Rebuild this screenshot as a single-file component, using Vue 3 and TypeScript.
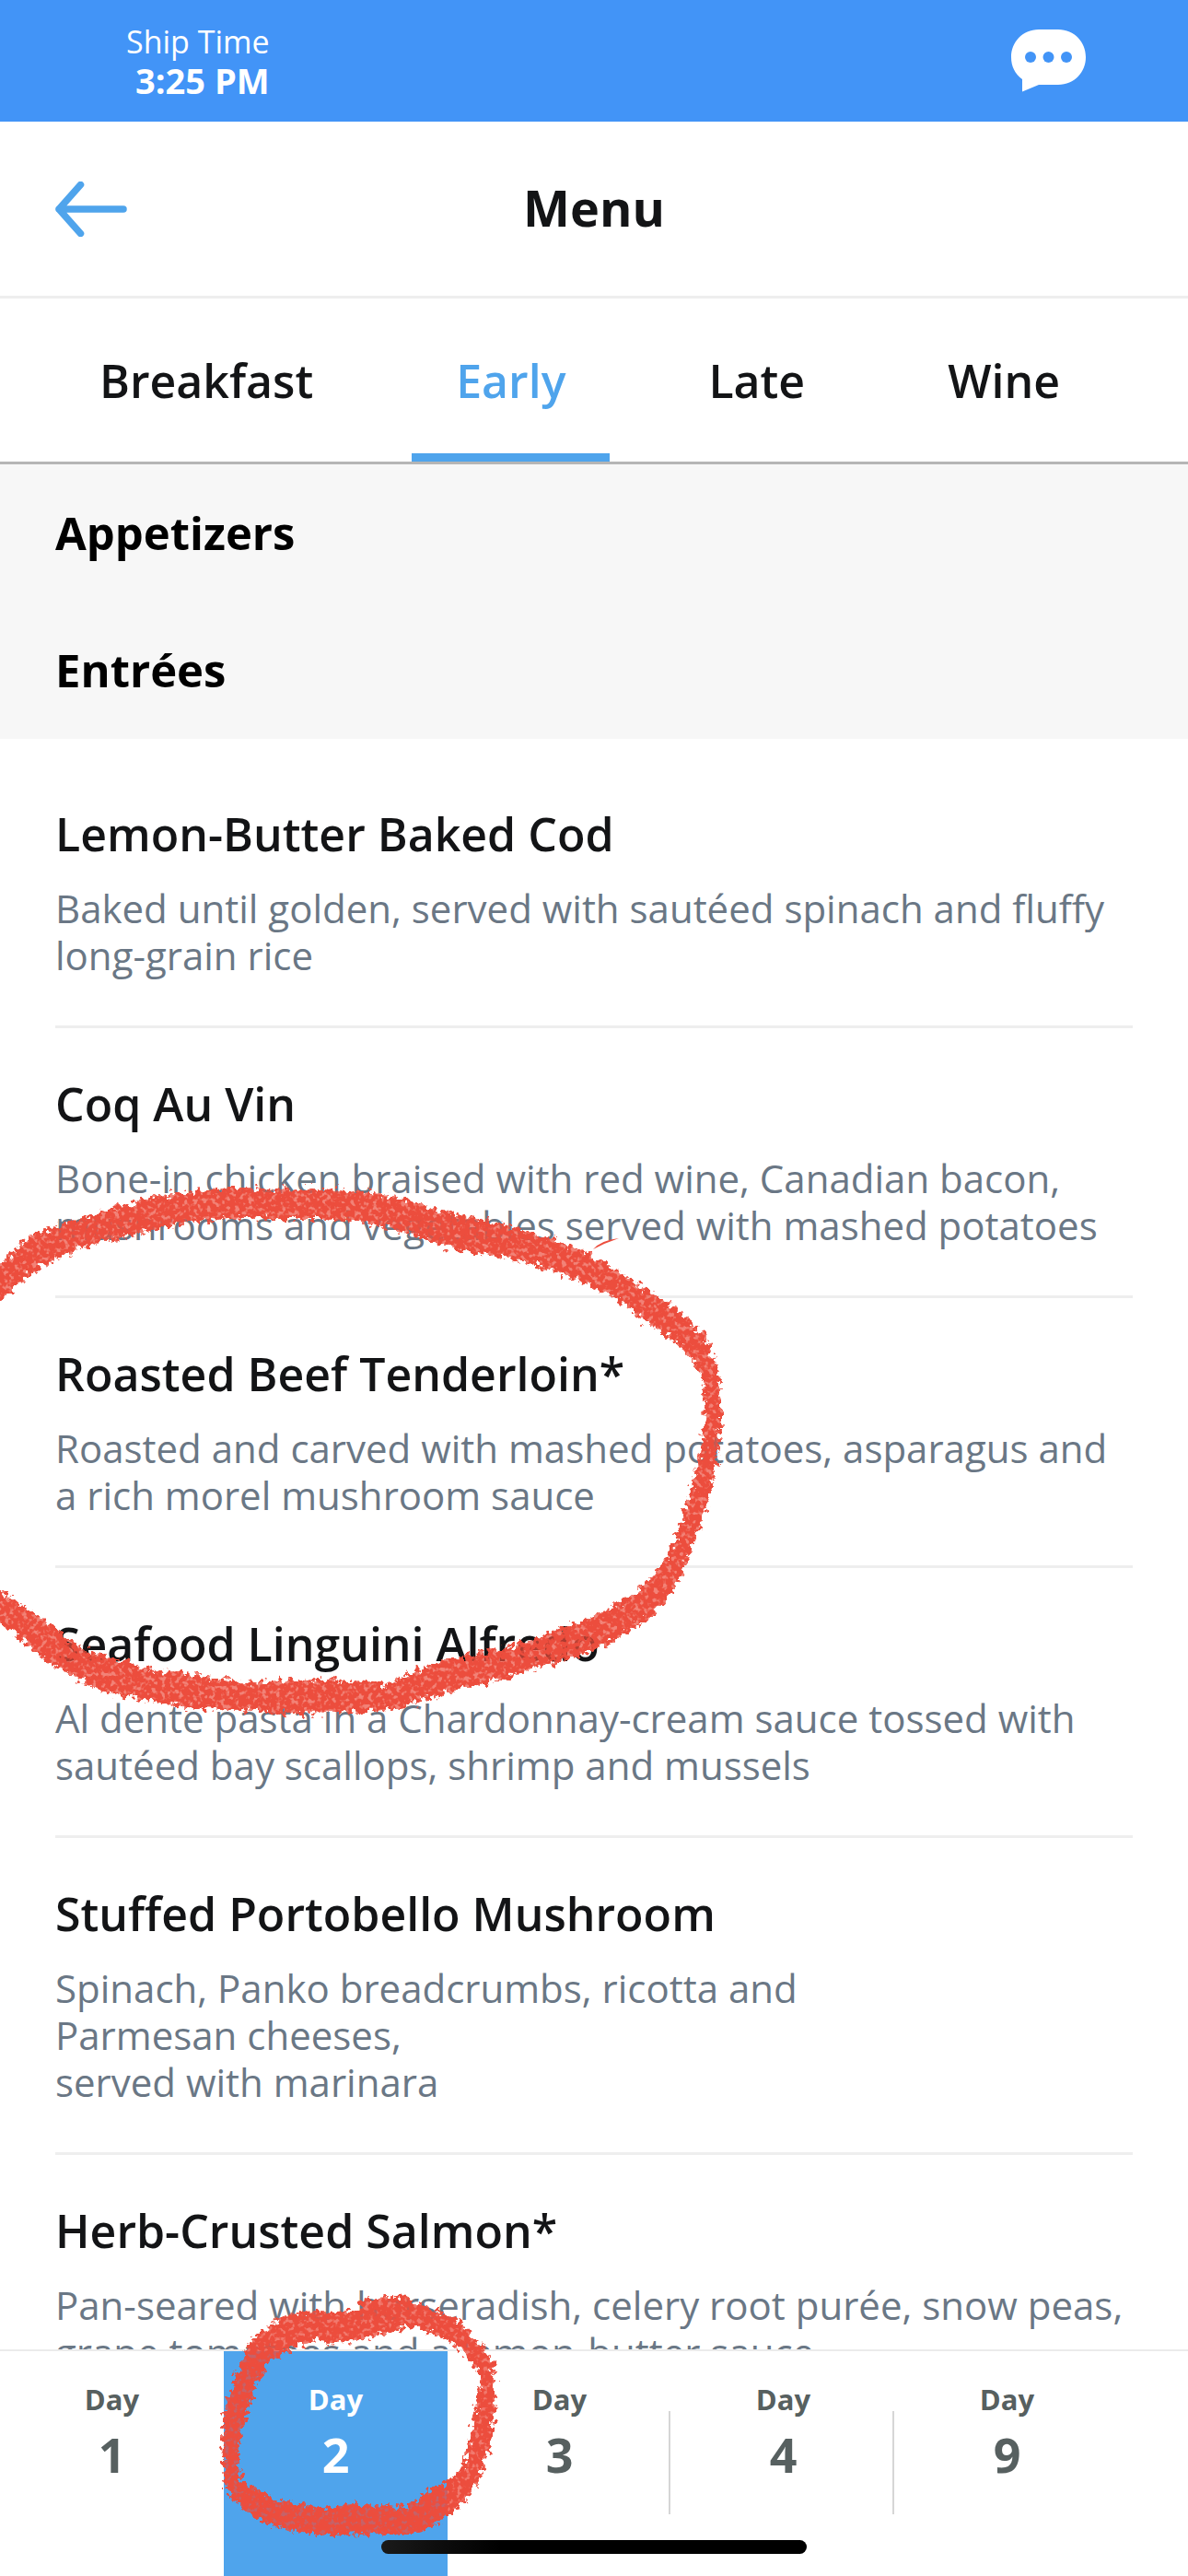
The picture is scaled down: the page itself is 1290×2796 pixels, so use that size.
<script setup lang="ts">
import { ref } from 'vue'

interface Dish {
  name: string
  lines: string[]
}

const meals: string[] = ['Breakfast', 'Early', 'Late', 'Wine']
const activeMeal = ref('Early')

const days: number[] = [1, 2, 3, 4, 9]
const activeDay = ref(2)

const dishes: Dish[] = [
  {
    name: 'Lemon-Butter Baked Cod',
    lines: ['Baked until golden, served with sautéed spinach and fluffy', 'long-grain rice'],
  },
  {
    name: 'Coq Au Vin',
    lines: ['Bone-in chicken braised with red wine, Canadian bacon,', 'mushrooms and vegetables served with mashed potatoes'],
  },
  {
    name: 'Roasted Beef Tenderloin*',
    lines: ['Roasted and carved with mashed potatoes, asparagus and', 'a rich morel mushroom sauce'],
  },
  {
    name: 'Seafood Linguini Alfredo',
    lines: ['Al dente pasta in a Chardonnay-cream sauce tossed with', 'sautéed bay scallops, shrimp and mussels'],
  },
  {
    name: 'Stuffed Portobello Mushroom',
    lines: ['Spinach, Panko breadcrumbs, ricotta and', 'Parmesan cheeses,', 'served with marinara'],
  },
  {
    name: 'Herb-Crusted Salmon*',
    lines: ['Pan-seared with horseradish, celery root purée, snow peas,', 'grape tomatoes and a lemon-butter sauce'],
  },
]
</script>

<template>
  <div class="screen">
    <header class="status">
      <div class="ship-time">
        <span>Ship Time</span>
        <strong>3:25 PM</strong>
      </div>
      <button class="chat" type="button" aria-label="Chat">
        <svg viewBox="0 0 81 68" width="81" height="68">
          <path fill="#fff" d="M30 0H51C69 0 81 14 81 30S69 60 51 60H30L12 67.500V54C4 48 0 40 0 30C0 14 12 0 30 0Z" />
          <g fill="#4294f7">
            <circle cx="21" cy="30" r="6" />
            <circle cx="40.500" cy="30" r="6" />
            <circle cx="60" cy="30" r="6" />
          </g>
        </svg>
      </button>
    </header>

    <div class="title-bar">
      <button class="back" type="button" aria-label="Back">
        <svg viewBox="0 0 78 60" width="78" height="60">
          <path d="M27.500 3.500L4 30L27.500 56.500M4 30H74" fill="none" stroke="#4fa4ec" stroke-width="7.500" stroke-linecap="round" stroke-linejoin="round" />
        </svg>
      </button>
      <h1>Menu</h1>
    </div>

    <nav class="meals" aria-label="Meals">
      <button
        v-for="meal in meals"
        :key="meal"
        type="button"
        :class="{ active: meal === activeMeal }"
        @click="activeMeal = meal"
      >
        {{ meal }}
      </button>
    </nav>

    <main class="content">
      <h2>Appetizers</h2>
      <h2>Entrées</h2>
      <ul class="dishes">
        <li v-for="dish in dishes" :key="dish.name">
          <h3>{{ dish.name }}</h3>
          <p>
            <template v-for="(line, i) in dish.lines" :key="line"><br v-if="i > 0" />{{ line }}</template>
          </p>
        </li>
      </ul>

      <svg class="mark mark-dish" viewBox="0 1270 800 610" width="800" height="610" aria-hidden="true">
        <defs>
          <filter id="crayon" x="-5%" y="-5%" width="110%" height="110%">
            <feTurbulence type="fractalNoise" baseFrequency="0.16" numOctaves="3" seed="7" result="noise" />
            <feDisplacementMap in="SourceGraphic" in2="noise" scale="18" xChannelSelector="R" yChannelSelector="G" result="rough" />
            <feTurbulence type="fractalNoise" baseFrequency="0.2" numOctaves="2" seed="21" />
            <feColorMatrix values="0 0 0 0 0  0 0 0 0 0  0 0 0 0 0  6 0 0 0 -1.900" result="grain" />
            <feComposite in="rough" in2="grain" operator="in" result="grained" />
            <feComponentTransfer in="rough" result="wash"><feFuncA type="linear" slope="0.7" /></feComponentTransfer>
            <feMerge><feMergeNode in="wash" /><feMergeNode in="grained" /></feMerge>
          </filter>
        </defs>
        <path
          filter="url(#crayon)"
          fill="#ec4d3d"
          d="M-40 1400L0 1372L33 1342L67 1329L100 1319L133 1309L167 1299L200 1294L250 1290L300 1291L350 1290L400 1294L433 1300L467 1311L500 1319L533 1325L567 1335L600 1345L633 1358L667 1377L700 1398L733 1420L758 1442L770 1460L780 1491L783 1523L783 1547L779 1578L773 1614L763 1649L750 1685L740 1709L727 1732L707 1754L683 1770L660 1784L627 1798L587 1809L550 1821L513 1831L467 1843L420 1857L367 1859L317 1860L283 1857L200 1853L160 1845L133 1841L100 1831L73 1815L47 1801L27 1782L0 1760L-40 1740L-40 1700L0 1726L23 1742L50 1760L77 1782L100 1793L133 1803L167 1813L217 1819L267 1827L300 1825L350 1823L400 1825L420 1829L443 1817L483 1802L533 1792L567 1784L607 1768L647 1754L687 1732L710 1709L730 1681L740 1649L750 1618L759 1586L765 1547L764 1520L762 1495L750 1472L733 1456L700 1434L667 1408L633 1392L600 1379L567 1369L533 1363L500 1357L467 1347L433 1335L400 1327L350 1323L300 1323L250 1321L200 1327L167 1335L133 1343L100 1351L67 1363L33 1382L0 1412L-40 1440Z"
        />
        <path fill="#ec4d3d" d="M644 1356Q653 1346 672 1344Q657 1349 644 1356Z" />
      </svg>
    </main>

    <nav class="days" aria-label="Days">
      <button
        v-for="day in days"
        :key="day"
        type="button"
        :class="{ active: day === activeDay, ruled: day === 3 || day === 4 }"
        @click="activeDay = day"
      >
        <span>Day</span>
        <strong>{{ day }}</strong>
      </button>

      <svg class="mark mark-day" viewBox="0 0 1020 1008" width="340" height="336" aria-hidden="true">
        <defs>
          <filter id="crayon-small" x="-5%" y="-5%" width="110%" height="110%">
            <feTurbulence type="fractalNoise" baseFrequency="0.055" numOctaves="3" seed="4" result="noise" />
            <feDisplacementMap in="SourceGraphic" in2="noise" scale="50" xChannelSelector="R" yChannelSelector="G" result="rough" />
            <feTurbulence type="fractalNoise" baseFrequency="0.07" numOctaves="2" seed="12" />
            <feColorMatrix values="0 0 0 0 0  0 0 0 0 0  0 0 0 0 0  6 0 0 0 -1.800" result="grain" />
            <feComposite in="rough" in2="grain" operator="in" result="grained" />
            <feComponentTransfer in="rough" result="wash"><feFuncA type="linear" slope="0.75" /></feComponentTransfer>
            <feMerge><feMergeNode in="wash" /><feMergeNode in="grained" /></feMerge>
          </filter>
        </defs>
        <path
          filter="url(#crayon-small)"
          fill="#ec4d3d"
          fill-rule="evenodd"
          d="M65 600L68 480L90 420L120 320L155 240L200 205L260 165L340 145L430 150L505 145L520 108L600 100L655 98L710 125L780 150L830 175L900 250L945 310L955 430L940 570L910 660L880 740L810 805L740 850L650 875L560 870L440 877L350 870L260 855L180 825L120 780L80 730L68 680ZM118 600L120 650L130 705L190 730L230 760L270 765L340 780L400 785L470 775L540 775L600 780L650 785L700 760L740 725L800 700L850 650L870 560L885 480L905 400L900 350L850 280L810 245L720 205L690 195L600 215L520 240L420 250L360 238L290 265L220 310L170 390L150 470L125 540Z"
        />
      </svg>
      <div class="home-indicator"></div>
    </nav>
  </div>
</template>

<style>
body {
  margin: 0;
  background: #fff;
}
</style>

<style scoped>
.screen {
  display: flex;
  flex-direction: column;
  height: 100vh;
  overflow: hidden;
  background: #fff;
  color: #131416;
  font-family: "Open Sans", "Noto Sans", sans-serif;
}

button {
  margin: 0;
  padding: 0;
  border: 0;
  background: none;
  color: inherit;
  font: inherit;
}

svg {
  display: block;
}

h1,
h2,
h3,
p,
ul {
  margin: 0;
  padding: 0;
}

.status {
  flex: none;
  display: flex;
  align-items: center;
  justify-content: space-between;
  box-sizing: border-box;
  height: 132px;
  padding: 0 111px 0 137px;
  background: #4294f7;
  color: #fff;
}

.ship-time {
  display: flex;
  flex-direction: column;
  text-align: right;
  font-size: 34px;
  line-height: 42px;
}

.ship-time strong {
  font-size: 38px;
}

.title-bar {
  flex: none;
  display: grid;
  grid-template-columns: 1fr auto 1fr;
  align-items: center;
  box-sizing: border-box;
  height: 192px;
  padding: 0 60px;
  border-bottom: 3px solid #eee;
}

.back {
  justify-self: start;
}

.title-bar h1 {
  padding-bottom: 4px;
  font-size: 54px;
  line-height: 72px;
  font-weight: 700;
}

.meals {
  flex: none;
  display: flex;
  gap: 59px;
  box-sizing: border-box;
  height: 180px;
  padding-left: 60px;
  border-bottom: 3px solid #b5b5b5;
}

.meals button {
  padding: 9px 48px 0;
  border-bottom: 9px solid transparent;
  font-size: 50px;
  font-weight: 600;
}

.meals .active {
  border-bottom-color: #4fa4ec;
  color: #4fa4ec;
}

.content {
  position: relative;
  flex: 1;
  min-height: 0;
  overflow: hidden;
}

.content h2 {
  padding: 0 60px;
  background: #f7f7f7;
  color: #000;
  font-size: 49px;
  line-height: 149px;
  font-weight: 700;
}

.dishes {
  padding: 21px 60px 0;
  list-style: none;
}

.dishes li {
  padding: 52px 0 51px;
  border-bottom: 3px solid #eee;
}

.dishes h3 {
  margin-bottom: 25px;
  font-size: 50px;
  line-height: 60px;
  font-weight: 600;
}

.dishes p {
  color: #6a7785;
  font-size: 42px;
  line-height: 51px;
  white-space: nowrap;
}

.days {
  position: relative;
  flex: none;
  display: flex;
  box-sizing: border-box;
  height: 246px;
  border-top: 2px solid #ebebeb;
  background: #fff;
  color: #576060;
}

.days button {
  position: relative;
  flex: none;
  display: flex;
  flex-direction: column;
  align-items: center;
  width: 243px;
  padding-top: 32px;
  font-size: 31px;
  line-height: 40px;
  font-weight: 700;
}

.days strong {
  font-size: 52px;
  line-height: 80px;
  font-weight: 700;
}

.days .active {
  background: #4fa4ec;
  color: #fff;
}

.days .ruled::after {
  content: "";
  position: absolute;
  top: 65px;
  right: 1px;
  width: 2px;
  height: 112px;
  background: #d6d6d6;
}

.mark {
  position: absolute;
  pointer-events: none;
}

.mark-dish {
  top: 766px;
  left: 0;
}

.mark-day {
  top: -92px;
  left: 220px;
}

.home-indicator {
  position: absolute;
  bottom: 24px;
  left: 50%;
  width: 462px;
  height: 15px;
  margin-left: -231px;
  border-radius: 8px;
  background: linear-gradient(90deg, #1a1a1a, #000 28%);
}
</style>
